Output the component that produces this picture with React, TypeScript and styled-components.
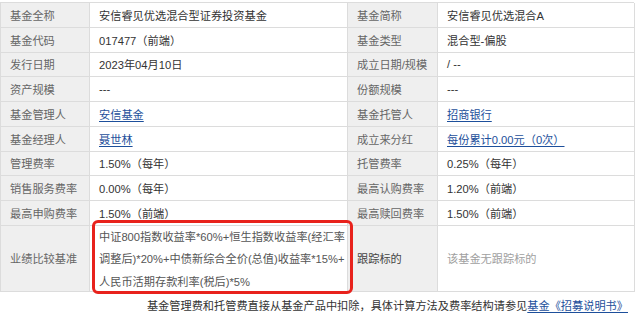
import { Fragment } from 'react';
import styled, { createGlobalStyle } from 'styled-components';

const GlobalStyle = createGlobalStyle`
  html, body {
    margin: 0;
    padding: 0;
    background: #fff;
  }
  body {
    font-family: "Liberation Sans", "Noto Sans CJK SC", sans-serif;
  }
`;

type Cell = { text: string; link?: boolean };
type Row = [string, Cell, string, Cell];

const rows: Row[] = [
  ['基金全称', { text: '安信睿见优选混合型证券投资基金' }, '基金简称', { text: '安信睿见优选混合A' }],
  ['基金代码', { text: '017477（前端）' }, '基金类型', { text: '混合型-偏股' }],
  ['发行日期', { text: '2023年04月10日' }, '成立日期/规模', { text: '/ --' }],
  ['资产规模', { text: '---' }, '份额规模', { text: '---' }],
  ['基金管理人', { text: '安信基金', link: true }, '基金托管人', { text: '招商银行', link: true }],
  ['基金经理人', { text: '聂世林', link: true }, '成立来分红', { text: '每份累计0.00元（0次）', link: true }],
  ['管理费率', { text: '1.50%（每年）' }, '托管费率', { text: '0.25%（每年）' }],
  ['销售服务费率', { text: '0.00%（每年）' }, '最高认购费率', { text: '1.20%（前端）' }],
  ['最高申购费率', { text: '1.50%（前端）' }, '最高赎回费率', { text: '1.50%（前端）' }],
];

const App = () => {
  return (
    <>
      <GlobalStyle />
      <Page>
        <Table>
          {rows.map(([l1, v1, l2, v2]) => (
            <Fragment key={l1}>
              <Label>{l1}</Label>
              <Value>{v1.link ? <Link>{v1.text}</Link> : v1.text}</Value>
              <Label>{l2}</Label>
              <Value>{v2.link ? <Link>{v2.text}</Link> : v2.text}</Value>
            </Fragment>
          ))}
          <Label>业绩比较基准</Label>
          <Benchmark>
            中证800指数收益率*60%+恒生指数收益率(经汇率
            <br />
            调整后)*20%+中债新综合全价(总值)收益率*15%+
            <br />
            人民币活期存款利率(税后)*5%
          </Benchmark>
          <Label $dark>跟踪标的</Label>
          <Value $muted>该基金无跟踪标的</Value>
        </Table>
        <Highlight />
        <Footer>
          基金管理费和托管费直接从基金产品中扣除，具体计算方法及费率结构请参见
          <Link>基金《招募说明书》</Link>
        </Footer>
      </Page>
    </>
  );
};

export default App;

const Page = styled.div`
  position: relative;
  width: 640px;
  padding-top: 2px;
`;

const Table = styled.div`
  display: grid;
  grid-template-columns: 89px 258px 90px 197px;
  grid-template-rows: repeat(9, 24.78px) 66px;
  width: 634px;
  border-top: 1px solid #dcdcdc;
  border-left: 1px solid #dcdcdc;
  box-sizing: border-box;
  font-size: 11.2px;
`;

const CellBase = styled.div`
  display: flex;
  align-items: center;
  box-sizing: border-box;
  padding: 0 9px;
  border-right: 1px solid #dcdcdc;
  border-bottom: 1px solid #dcdcdc;
  white-space: nowrap;
`;

const Label = styled(CellBase)<{ $dark?: boolean }>`
  background: #efefef;
  color: ${(p) => (p.$dark ? '#444' : '#666')};
`;

const Value = styled(CellBase)<{ $muted?: boolean }>`
  background: #fff;
  color: ${(p) => (p.$muted ? '#a0a0a0' : '#333')};
`;

const Benchmark = styled.div`
  box-sizing: border-box;
  padding: 0 0 0 9px;
  border-right: 1px solid #dcdcdc;
  border-bottom: 1px solid #dcdcdc;
  line-height: 22.5px;
  color: #555;
  white-space: nowrap;
`;

const Link = styled.span`
  color: #1d4f9b;
  text-decoration: underline;
  text-underline-offset: 2px;
`;

const Highlight = styled.div`
  position: absolute;
  left: 92px;
  top: 220px;
  width: 261px;
  height: 74px;
  box-sizing: border-box;
  border: 3.5px solid #e8221c;
  border-radius: 6px;
  pointer-events: none;
`;

const Footer = styled.div`
  width: 634px;
  box-sizing: border-box;
  padding-right: 6px;
  margin-top: 6px;
  text-align: right;
  font-size: 11.2px;
  line-height: 16px;
  color: #333;
`;
